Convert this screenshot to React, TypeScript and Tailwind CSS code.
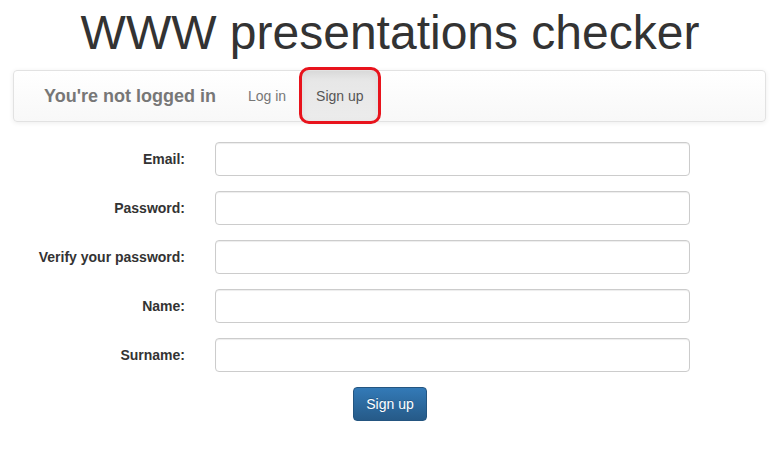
export default function App() {
    const fields = ['Email:', 'Password:', 'Verify your password:', 'Name:', 'Surname:'];

    return (
        <div className="min-h-screen bg-white text-[#333] font-['Liberation_Sans',Arial,sans-serif] text-[14px]">
            {/* Title */}
            <h1 className="text-center text-[48px] leading-[53px] pt-[6px] mb-[11px] font-normal">
                WWW presentations checker
            </h1>

            {/* Navbar */}
            <nav className="mx-[13px] w-[753px] h-[52px] border border-[#e2e2e2] rounded-[4px] bg-linear-to-b from-white to-[#f8f8f8] shadow-[0_1px_5px_rgba(0,0,0,0.075)] flex items-stretch px-[15px]">
                <span className="pl-[15px] pr-[17px] py-[15px] text-[18px] leading-[20px] font-bold text-[#777]">
                    You're not logged in
                </span>
                <a className="px-[15px] py-[15px] leading-[20px] text-[#777]">Log in</a>
                <a className="relative px-[15px] py-[15px] leading-[20px] text-[#555] bg-linear-to-b from-[#e6e6e6] to-[#ececec] shadow-[inset_0_3px_9px_rgba(0,0,0,0.075)]">
                    Sign up
                    {/* highlight annotation */}
                    <span className="absolute -left-[2px] -right-[2px] -top-[4px] -bottom-[3px] border-[3px] border-[#e8131c] rounded-[10px] pointer-events-none" />
                </a>
            </nav>

            {/* Form */}
            <form className="mt-[20px]">
                <div className="grid grid-cols-[185px_475px] gap-x-[30px] gap-y-[15px]">
                    {fields.map((label) => (
                        <div key={label} className="contents">
                            <label className="text-right font-bold pt-[7px] leading-[20px]">{label}</label>
                            <input
                                type={label.includes('assword') ? 'password' : 'text'}
                                className="h-[34px] w-full border border-[#ccc] rounded-[4px] px-[12px] outline-none shadow-[inset_0_1px_1px_rgba(0,0,0,0.075)]"
                            />
                        </div>
                    ))}
                </div>
                <div className="flex justify-center mt-[15px]">
                    <button
                        type="submit"
                        className="h-[34px] px-[12px] rounded-[4px] border border-[#245580] bg-linear-to-b from-[#337ab7] to-[#265a88] text-white leading-[20px] [text-shadow:0_-1px_0_rgba(0,0,0,0.2)]"
                    >
                        Sign up
                    </button>
                </div>
            </form>
        </div>
    );
}
